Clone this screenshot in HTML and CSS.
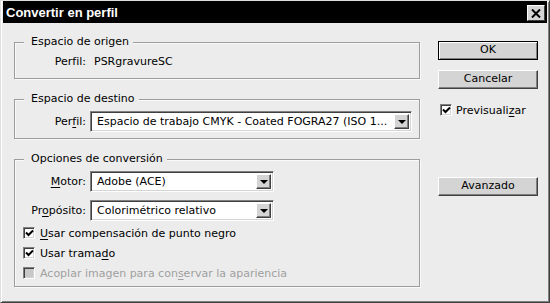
FILE: index.html
```html
<!DOCTYPE html>
<html lang="es">
<head>
    <meta charset="UTF-8">
    <title>Convertir en perfil</title>
    <link rel="stylesheet" href="styles.css">
</head>
<body>

<div class="window">
    <div class="titlebar">
        <span class="title">Convertir en perfil</span>
        <span class="close-btn">
            <svg width="10" height="9" viewBox="0 0 10 9"><path d="M1 0.5 L9 8.5 M9 0.5 L1 8.5" stroke="#000" stroke-width="2"/></svg>
        </span>
    </div>

    <div class="dialog-body">
        <div class="main-col">
            <div class="group group-origin">
                <div class="group-title">Espacio de origen</div>
                <div class="info-row">
                    <span class="info-label">Perfil:</span>
                    <span class="info-value">PSRgravureSC</span>
                </div>
            </div>

            <div class="group group-dest">
                <div class="group-title">Espacio de destino</div>
                <div class="field-row">
                    <span class="field-label">Per<u>f</u>il:</span>
                    <div class="select select-wide">
                        <span class="select-value">Espacio de trabajo CMYK - Coated FOGRA27 (ISO 1...</span>
                        <span class="select-arrow"><i></i></span>
                    </div>
                </div>
            </div>

            <div class="group group-options">
                <div class="group-title">Opciones de conversión</div>
                <div class="field-row">
                    <span class="field-label"><u>M</u>otor:</span>
                    <div class="select">
                        <span class="select-value">Adobe (ACE)</span>
                        <span class="select-arrow"><i></i></span>
                    </div>
                </div>
                <div class="field-row field-row-second">
                    <span class="field-label">Pr<u>o</u>pósito:</span>
                    <div class="select">
                        <span class="select-value">Colorimétrico relativo</span>
                        <span class="select-arrow"><i></i></span>
                    </div>
                </div>
                <div class="check-row">
                    <span class="checkbox"><svg width="9" height="8" viewBox="0 0 9 8"><path d="M1 3.5 L3.5 6 L8 1.5" stroke="#000" stroke-width="2" fill="none"/></svg></span>
                    <span><u>U</u>sar compensación de punto negro</span>
                </div>
                <div class="check-row">
                    <span class="checkbox"><svg width="9" height="8" viewBox="0 0 9 8"><path d="M1 3.5 L3.5 6 L8 1.5" stroke="#000" stroke-width="2" fill="none"/></svg></span>
                    <span>Usar trama<u>d</u>o</span>
                </div>
                <div class="check-row disabled">
                    <span class="checkbox"></span>
                    <span>Acoplar imagen para con<u>s</u>ervar la apariencia</span>
                </div>
            </div>
        </div>

        <div class="side-col">
            <div class="btn btn-default">OK</div>
            <div class="btn btn-cancel">Cancelar</div>
            <div class="check-row preview-row">
                <span class="checkbox"><svg width="9" height="8" viewBox="0 0 9 8"><path d="M1 3.5 L3.5 6 L8 1.5" stroke="#000" stroke-width="2" fill="none"/></svg></span>
                <span>Previsuali<u>z</u>ar</span>
            </div>
            <div class="btn btn-advanced">Avanzado</div>
        </div>
    </div>
</div>

</body>
</html>
```

FILE: styles.css
```css
html, body {
    margin: 0;
    padding: 0;
}

body {
    font-family: "DejaVu Sans", Verdana, sans-serif;
    font-size: 11px;
    color: #000;
    background-color: #ececec;
}

u {
    text-decoration-thickness: 1px;
    text-underline-offset: 2px;
}

.window {
    width: 550px;
    height: 303px;
    box-sizing: border-box;
    border: 1px solid;
    border-color: #dfdfdf #404040 #404040 #dfdfdf;
    box-shadow: inset 1px 1px #fff, inset -1px -1px #808080;
    padding: 0 2px 2px 2px;
    background-color: #ececec;
}

.titlebar {
    height: 22px;
    background-color: #000;
    display: flex;
    align-items: center;
    justify-content: space-between;
    padding: 0 2px 0 3px;
}

.title {
    color: #fff;
    font-family: "Liberation Sans", Arial, sans-serif;
    font-weight: bold;
    font-size: 13px;
}

.close-btn {
    width: 18px;
    height: 16px;
    box-sizing: border-box;
    background-color: #d4d4d4;
    border: 1px solid;
    border-color: #fff #404040 #404040 #fff;
    display: flex;
    align-items: center;
    justify-content: center;
    margin-top: 2px;
}

.dialog-body {
    display: flex;
    padding: 18px 0 0 11px;
}

.main-col {
    width: 406px;
}

.side-col {
    width: 100px;
    margin-left: 18px;
}

/* group boxes */
.group {
    border: 1px solid #9c9c9c;
    box-shadow: inset 1px 1px #fafafa, 1px 1px #fafafa;
}

.group-origin {
    margin-top: 1px;
    height: 37px;
    box-sizing: border-box;
}

.group-dest {
    margin-top: 20px;
    height: 40px;
    box-sizing: border-box;
}

.group-options {
    margin-top: 20px;
    height: 128px;
    box-sizing: border-box;
}

.group-title {
    width: max-content;
    margin: -8px 0 0 9px;
    padding: 0 4px 0 7px;
    line-height: 14px;
    background-color: #ececec;
}

.info-row {
    display: flex;
    margin-top: 6px;
    line-height: 14px;
}

.info-label {
    width: 71px;
    text-align: right;
}

.info-value {
    margin-left: 8px;
}

.field-row {
    display: flex;
    align-items: center;
    margin-top: 5px;
}

.field-row-second {
    margin-top: 8px;
}

.field-label {
    width: 71px;
    text-align: right;
    margin-right: 4px;
}

/* drop-down */
.select {
    width: 184px;
    height: 21px;
    box-sizing: border-box;
    background-color: #fff;
    border: 1px solid;
    border-color: #808080 #fff #fff #808080;
    box-shadow: inset 1px 1px #404040, inset -1px -1px #d4d4d4;
    display: flex;
    align-items: center;
    padding: 0 2px 0 6px;
}

.select-wide {
    width: 322px;
}

.select-value {
    flex: 1;
    white-space: nowrap;
    overflow: hidden;
}

.select-arrow {
    width: 15px;
    height: 15px;
    box-sizing: border-box;
    background-color: #d4d4d4;
    border: 1px solid;
    border-color: #fff #404040 #404040 #fff;
    box-shadow: inset -1px -1px #808080;
    display: flex;
    align-items: center;
    justify-content: center;
}

.select-arrow i {
    width: 0;
    height: 0;
    border-left: 4px solid transparent;
    border-right: 4px solid transparent;
    border-top: 4px solid #000;
    margin-top: 1px;
}

/* check boxes */
.check-row {
    display: flex;
    align-items: center;
    height: 20px;
    padding-left: 8px;
}

.group-options .field-row-second + .check-row {
    margin-top: 2px;
}

.checkbox {
    width: 12px;
    height: 12px;
    box-sizing: border-box;
    background-color: #fff;
    border: 1px solid;
    border-color: #808080 #fff #fff #808080;
    box-shadow: inset 1px 1px #404040, inset -1px -1px #d4d4d4;
    margin-right: 5px;
    display: flex;
    align-items: center;
    justify-content: center;
}

.disabled {
    color: #a0a0a0;
}

.disabled .checkbox {
    background-color: #c8c8c8;
}

.preview-row {
    padding-left: 2px;
    height: 16px;
    margin-top: 13px;
}

.preview-row .checkbox {
    margin-right: 4px;
}

/* buttons */
.btn {
    height: 19px;
    box-sizing: border-box;
    background-color: #d4d4d4;
    border: 1px solid;
    border-color: #fff #404040 #404040 #fff;
    box-shadow: inset -1px -1px #808080;
    text-align: center;
    line-height: 16px;
}

.btn-default {
    border-color: #000;
    box-shadow: inset 1px 1px #fff, inset -1px -1px #808080;
}

.btn-cancel {
    margin-top: 10px;
}

.btn-advanced {
    margin-top: 59px;
}
```
